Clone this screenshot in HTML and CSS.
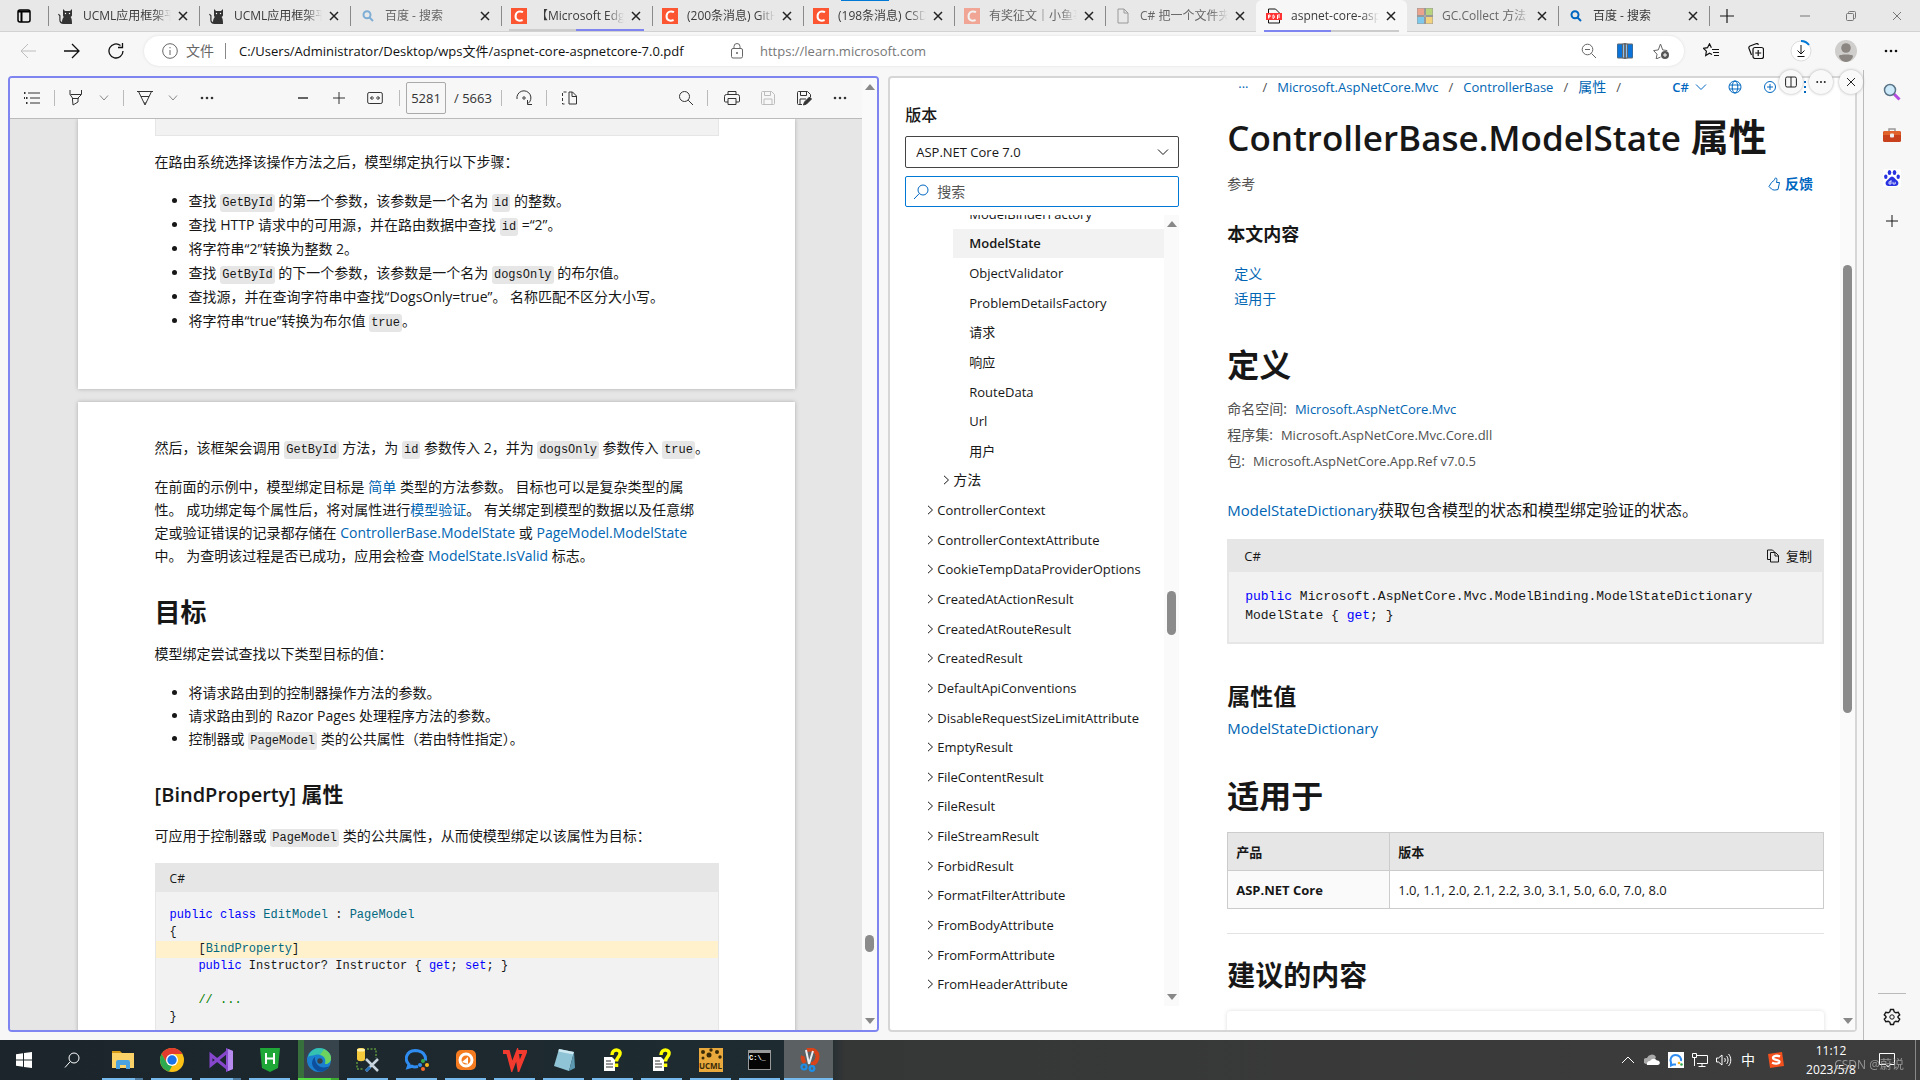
FILE: index.html
```html
<!DOCTYPE html>
<html lang="zh-CN">
<head>
<meta charset="utf-8">
<title>aspnet-core-aspnetcore-7.0.pdf</title>
<link rel="stylesheet" href="styles.css">
</head>
<body>
<svg class="defs" aria-hidden="true">
  <symbol id="x" viewBox="0 0 10 10"><path d="M1 1l8 8M9 1L1 9"/></symbol>
  <symbol id="dots" viewBox="0 0 16 16"><g fill="currentColor" stroke="none"><circle cx="3" cy="8" r="1.3"/><circle cx="8" cy="8" r="1.3"/><circle cx="13" cy="8" r="1.3"/></g></symbol>
  <symbol id="down" viewBox="0 0 10 10"><path d="M1 2.500l4 4.500 4-4.500"/></symbol>
  <symbol id="right" viewBox="0 0 10 10"><path d="M3 .8L7.500 5 3 9.200"/></symbol>
  <symbol id="plus" viewBox="0 0 12 12"><path d="M6 0v12M0 6h12"/></symbol>
  <symbol id="cat" viewBox="0 0 16 16"><path fill="#333" stroke="none" d="M5 1l2 2h5l2-2v6c0 1-.6 1.500-1.400 2 1.200 1.500 1.400 3.500 1.400 7H5.500C3 16 1.300 14.500 1.300 12V8L0 6.500l.8-.7L2.500 7.500V12c0 1 .5 1.600 1.500 2 .1-2 .6-3.800 1.800-5C5.200 8.500 5 8 5 7z"/><g fill="#fff" stroke="none"><circle cx="7.500" cy="5.500" r=".7"/><circle cx="11.500" cy="5.500" r=".7"/></g></symbol>
  <symbol id="lens" viewBox="0 0 12 12"><circle cx="5" cy="4.800" r="3.500"/><path d="M7.500 7.500L11 11"/></symbol>
  <symbol id="csdn" viewBox="0 0 16 16"><path fill="#fc5531" stroke="none" d="M0 0h16v16H0z"/><path fill="none" stroke="#fff" stroke-width="2" d="M12 4.200C9.500 2.800 5.200 3 4.600 7.500c-.5 4.800 3.400 6 7 4.500"/></symbol>
  <symbol id="mag" viewBox="0 0 16 16"><circle cx="6.500" cy="6.500" r="5"/><path d="M10.200 10.200L15 15"/></symbol>
  <symbol id="disk" viewBox="0 0 16 16"><path d="M2.500 1.500h9l3 3v9a1 1 0 0 1-1 1h-11a1 1 0 0 1-1-1v-11a1 1 0 0 1 1-1zM4.500 1.500v4h6v-4M4 14.500V9h8v5.500"/></symbol>
  <symbol id="helpdoc" viewBox="0 0 20 24"><path fill="#fff" d="M1 9h8l3 3v11H1z"/><path fill="none" stroke="#333" d="M3 13h5M3 16h7M3 19h7"/><path fill="none" stroke="#ff0" stroke-width="3.500" d="M9 7c0-7 9-6 8-1-.5 3-3.500 3.500-3.500 7.500M13.500 15.500v3.500"/></symbol>
</svg>

<header class="tabs">
  <button class="tabmenu" aria-label="标签操作"><svg class="i14" viewBox="0 0 14 14"><rect x="1" y="1" width="12" height="12" rx="2" stroke-width="1.500"/><path d="M1 2.500h12M4.500 3v10" stroke-width="2"/></svg></button>
  <nav class="tablist">
    <a class="tab" href="#"><svg class="fav"><use href="#cat"/></svg><span>UCML应用框架平台</span><svg class="x"><use href="#x"/></svg></a>
    <a class="tab" href="#"><svg class="fav"><use href="#cat"/></svg><span>UCML应用框架平台</span><svg class="x"><use href="#x"/></svg></a>
    <a class="tab asleep" href="#"><svg class="fav search"><use href="#lens"/></svg><span>百度 - 搜索</span><svg class="x"><use href="#x"/></svg></a>
    <a class="tab split-r" href="#"><svg class="fav"><use href="#csdn"/></svg><span>【Microsoft Edge】</span><svg class="x"><use href="#x"/></svg></a>
    <a class="tab" href="#"><svg class="fav"><use href="#csdn"/></svg><span>(200条消息) GitHub</span><svg class="x"><use href="#x"/></svg></a>
    <a class="tab loading" href="#"><svg class="fav"><use href="#csdn"/></svg><span>(198条消息) CSDN</span><svg class="x"><use href="#x"/></svg></a>
    <a class="tab asleep" href="#"><svg class="fav"><use href="#csdn"/></svg><span>有奖征文｜小鱼事</span><svg class="x"><use href="#x"/></svg></a>
    <a class="tab asleep" href="#"><svg class="fav" viewBox="0 0 16 16"><path d="M3 1h6l4 4v10H3zM9 1v4h4"/></svg><span>C# 把一个文件夹下</span><svg class="x"><use href="#x"/></svg></a>
    <a class="tab active split-l" href="#"><svg class="fav" viewBox="0 0 16 16"><path d="M2.500 15V1h7l4 4v10z" stroke="#111"/><path fill="#f33" stroke="none" d="M0 5h16v7H0z"/><path stroke="#fff" d="M2.500 10.500V7h1.500v2H3M7 7v3.500c2 0 2-3.500 0-3.500zM11.500 11V7H14M11.500 9H14"/></svg><span>aspnet-core-aspnet</span><svg class="x"><use href="#x"/></svg></a>
    <a class="tab first asleep" href="#"><svg class="fav" viewBox="0 0 16 16" stroke="none"><path fill="#f25022" d="M0 0h7.500v7.500H0z"/><path fill="#7fba00" d="M8.500 0H16v7.500H8.500z"/><path fill="#00a4ef" d="M0 8.500h7.500V16H0z"/><path fill="#ffb900" d="M8.500 8.500H16V16H8.500z"/></svg><span>GC.Collect 方法 (S</span><svg class="x"><use href="#x"/></svg></a>
    <a class="tab" href="#"><svg class="fav search"><use href="#lens"/></svg><span>百度 - 搜索</span><svg class="x"><use href="#x"/></svg></a>
  </nav>
  <button class="newtab" aria-label="新建标签页"><svg class="i14"><use href="#plus"/></svg></button>
  <div class="winbtns">
    <button aria-label="最小化"><svg class="i10" viewBox="0 0 10 10"><path d="M0 5h10"/></svg></button>
    <button aria-label="还原"><svg class="i10" viewBox="0 0 10 10"><rect x=".5" y="2.500" width="7" height="7" rx="1"/><path d="M2.500 2V1.500a1 1 0 0 1 1-1h5a1 1 0 0 1 1 1v5a1 1 0 0 1-1 1H8"/></svg></button>
    <button aria-label="关闭"><svg class="i10"><use href="#x"/></svg></button>
  </div>
</header>

<div class="navbar">
  <button class="hist dim" aria-label="后退"><svg class="i16" viewBox="0 0 16 16"><path d="M16 8H1M8 1L1 8l7 7"/></svg></button>
  <button class="hist" aria-label="前进"><svg class="i16" viewBox="0 0 16 16"><path d="M0 8h15M8 1l7 7-7 7" stroke-width="1.300"/></svg></button>
  <button class="hist" aria-label="刷新"><svg class="i16" viewBox="0 0 16 16"><path d="M15 8a7 7 0 1 1-2.500-5.400M14.500 0v4.500H10" stroke-width="1.300"/></svg></button>
  <div class="omnibox">
    <svg class="i16 info" viewBox="0 0 16 16"><circle cx="8" cy="8" r="7.300"/><path d="M8 7v5M8 4v1.300"/></svg>
    <span class="scheme">文件</span>
    <input class="url" aria-label="地址" value="C:/Users/Administrator/Desktop/wps文件/aspnet-core-aspnetcore-7.0.pdf">
    <svg class="i16 lock" viewBox="0 0 16 16"><rect x="2.500" y="5.500" width="11" height="9.500" rx="1.500"/><path d="M5 5.500V3.500a3 3 0 0 1 6 0v2"/><circle cx="8" cy="10" r=".6" fill="currentColor"/></svg>
    <span class="url2">https://learn.microsoft.com</span>
    <button class="ob" aria-label="缩放"><svg class="i16" viewBox="0 0 16 16"><circle cx="6.500" cy="6.500" r="5.300"/><path d="M10.500 10.500L15 15M4 6.500h5"/></svg></button>
    <button class="ob" aria-label="拆分窗口"><svg class="i16" viewBox="0 0 16 16" stroke="none"><path fill="#0a74da" d="M1 1h6v14H1a1 1 0 0 1-1-1V2a1 1 0 0 1 1-1zM9 1h6a1 1 0 0 1 1 1v12a1 1 0 0 1-1 1H9z"/><path fill="#8cc3f0" d="M5.500 1h5v14h-5z"/><path fill="#0a74da" d="M7.600 0h.8v16h-.8z"/></svg></button>
    <button class="ob" aria-label="收藏"><svg class="i16" viewBox="0 0 16 16"><path d="M7.500 14l-4.300 2 .8-4.800L.6 7.600l4.700-.7L7.500 1l2.200 5.900 4.600.7"/><circle cx="12" cy="12" r="4" fill="#555" stroke="none"/><path stroke="#fff" d="M12 10v4M10 12h4"/></svg></button>
  </div>
  <button class="nb" aria-label="收藏夹"><svg class="i16" viewBox="0 0 16 16"><path d="M9 11.500L6.500 10.300 2.700 12.500l.7-4.300L.5 5.300l4-.6L6.500.8l1.900 3.900M9 6.500h7M10 9.500h6M11 12.500h5" stroke-width="1.200"/></svg></button>
  <button class="nb" aria-label="集锦"><svg class="i16" viewBox="0 0 16 16"><rect x="5" y="4.500" width="10.500" height="11" rx="2" stroke-width="1.200"/><path stroke-width="1.200" d="M10.200 7v6M7.200 10h6M3.500 12L1 5.500a2 2 0 0 1 1-2.500l6-2.300a2 2 0 0 1 2.500 1"/></svg></button>
  <button class="nb" aria-label="下载"><svg class="i22" viewBox="0 0 22 22"><circle cx="11" cy="11" r="10" fill="#fff" stroke="#ddd"/><path d="M11 1a10 10 0 0 1 8 4" stroke="#0078d4" stroke-width="2"/><path d="M11 5v9M7.500 10.500L11 14l3.500-3.500M7.500 16.500h7"/></svg></button>
  <button class="nb" aria-label="个人资料"><svg class="i22" viewBox="0 0 22 22"><g stroke="none"><circle cx="11" cy="11" r="11" fill="#d0cecc"/><circle cx="11" cy="8" r="4.800" fill="#8b8681"/><path fill="#8b8681" d="M4 16c0-2 14-2 14 0 0 2-3 6-7 6s-7-4-7-6z"/></g></svg></button>
  <button class="nb" aria-label="设置及其他"><svg class="i16"><use href="#dots"/></svg></button>
</div>

<main class="work">
  <section class="pane pdf">
    <div class="pdfcol">
      <div class="toolbar">
        <button class="t32" aria-label="目录"><svg class="i16" viewBox="0 0 16 16"><path d="M4 3h12M6 8h10M6 13h10"/><path d="M0 3h1.500M2 8h1.500M2 13h1.500M0 8h1" stroke-width="2"/></svg></button><i class="sep"></i>
        <button class="t30" aria-label="突出显示"><svg class="i16" viewBox="0 0 16 16"><path d="M2 0v4.500L4.500 8v2l.5 5 5-3V8L13.500 4.500V0M2.500 4.500h10.500M4.500 8.500h6"/></svg></button><button class="t26" aria-label="突出显示选项"><svg class="i10 soft"><use href="#down"/></svg></button><i class="sep"></i>
        <button class="t30" aria-label="绘制"><svg class="i16" viewBox="0 0 16 16"><path d="M0 1.500h16M1.500 1.500L8 15l6.500-13.500M4 6.500h8M7 13h2"/></svg></button><button class="t26" aria-label="绘制选项"><svg class="i10 soft"><use href="#down"/></svg></button><button class="t42" aria-label="更多"><svg class="i16"><use href="#dots"/></svg></button>
        <button class="t36 mid" aria-label="缩小"><svg class="i10" viewBox="0 0 10 10"><path d="M0 5h10" stroke-width="1.500"/></svg></button><button class="t36" aria-label="放大"><svg class="i12"><use href="#plus"/></svg></button><button class="t36" aria-label="适应页宽"><svg class="i16" viewBox="0 0 16 16"><rect x=".7" y="2.500" width="14.600" height="11" rx="1.500"/><path d="M3.500 8h3.500M9 8h3.500M5.500 6l-2 2 2 2M10.500 6l2 2-2 2"/></svg></button><i class="sep"></i>
        <input class="pageno" aria-label="页码" value="5281"><span class="pages">/ 5663</span><i class="sep"></i>
        <button class="t32" aria-label="旋转"><svg class="i16" viewBox="0 0 16 16"><path d="M1 9A7 7 0 1 1 12 13.500M11.500 10v4.500H16"/><circle cx="8" cy="8" r="1.200"/></svg></button><i class="sep"></i>
        <button class="t32" aria-label="页面视图"><svg class="i16" viewBox="0 0 16 16"><path d="M8 2h3.500L15.500 6v8H8zM11 2v4.500h4"/><path stroke-dasharray="3 2" d="M5.500 2H1.500v12h4"/></svg></button>
        <button class="t30 end" aria-label="查找"><svg class="i16"><use href="#mag"/></svg></button><i class="sep"></i>
        <button class="t36" aria-label="打印"><svg class="i16" viewBox="0 0 16 16"><path d="M4 4.500V1.500h8v3M4 12H1.500a1 1 0 0 1-1-1V6.500a2 2 0 0 1 2-2h11a2 2 0 0 1 2 2V11a1 1 0 0 1-1 1H12M4 8.500h8v6H4z"/></svg></button><button class="t36 dim" aria-label="保存"><svg class="i16"><use href="#disk"/></svg></button><button class="t36" aria-label="另存为"><svg class="i16" viewBox="0 0 16 16"><path d="M6 14.500H2.500a1 1 0 0 1-1-1v-11a1 1 0 0 1 1-1h9l3 3V7M4.500 1.500v4h6v-4M4 14.500V9h6"/><path d="M7.500 15l1-3 5-5 2 2-5 5z" fill="currentColor"/></svg></button><button class="t36" aria-label="更多操作"><svg class="i16"><use href="#dots"/></svg></button>
      </div>
      <div class="pages-view">
        <article class="sheet s1">
          <div class="codetail"></div>
          <p>在路由系统选择该操作方法之后，模型绑定执行以下步骤：</p>
          <ul class="steps">
            <li>查找 <code>GetById</code> 的第一个参数，该参数是一个名为 <code>id</code> 的整数。</li>
            <li>查找 HTTP 请求中的可用源，并在路由数据中查找 <code>id</code> =“2”。</li>
            <li>将字符串“2”转换为整数 2。</li>
            <li>查找 <code>GetById</code> 的下一个参数，该参数是一个名为 <code>dogsOnly</code> 的布尔值。</li>
            <li>查找源，并在查询字符串中查找“DogsOnly=true”。 名称匹配不区分大小写。</li>
            <li>将字符串“true”转换为布尔值 <code>true</code>。</li>
          </ul>
        </article>
        <article class="sheet s2">
          <p>然后，该框架会调用 <code>GetById</code> 方法，为 <code>id</code> 参数传入 2，并为 <code>dogsOnly</code> 参数传入 <code>true</code>。</p>
          <p class="gap">在前面的示例中，模型绑定目标是 <a href="#">简单</a> 类型的方法参数。 目标也可以是复杂类型的属<br>性。 成功绑定每个属性后，将对属性进行<a href="#">模型验证</a>。 有关绑定到模型的数据以及任意绑<br>定或验证错误的记录都存储在 <a href="#">ControllerBase.ModelState</a> 或 <a href="#">PageModel.ModelState</a><br>中。 为查明该过程是否已成功，应用会检查 <a href="#">ModelState.IsValid</a> 标志。</p>
          <h2>目标</h2>
          <p>模型绑定尝试查找以下类型目标的值：</p>
          <ul>
            <li>将请求路由到的控制器操作方法的参数。</li>
            <li>请求路由到的 Razor Pages 处理程序方法的参数。</li>
            <li>控制器或 <code>PageModel</code> 类的公共属性（若由特性指定）。</li>
          </ul>
          <h3><span>[BindProperty]</span> 属性</h3>
          <p>可应用于控制器或 <code>PageModel</code> 类的公共属性，从而使模型绑定以该属性为目标：</p>
          <div class="code">
            <div class="codehead">C#</div>
            <pre><b>public</b> <b>class</b> <i>EditModel</i> : <i>PageModel</i>
{
<mark>    [<i>BindProperty</i>]</mark>
    <b>public</b> Instructor? Instructor { <b>get</b>; <b>set</b>; }

    <em>// ...</em>
}</pre>
          </div>
        </article>
      </div>
    </div>
    <div class="scroll pdfscroll"><i class="up"></i><i class="g1"></i><i class="thumb short"></i><i class="g2"></i><i class="dn"></i></div>
  </section>

  <section class="pane docs">
    <aside class="toc">
      <label for="ver">版本</label>
      <div class="select"><select id="ver"><option>ASP.NET Core 7.0</option></select><svg class="i12" viewBox="0 0 12 12"><path d="M1 3.500l5 5 5-5"/></svg></div>
      <div class="find"><svg class="i16" viewBox="0 0 16 16"><circle cx="10" cy="6" r="5"/><path d="M6.300 9.500L1 15"/></svg><input aria-label="搜索" placeholder="搜索"></div>
      <div class="tree">
        <ul>
          <li class="l3"><a href="#">ModelBinderFactory</a></li>
          <li class="l3 sel"><a href="#">ModelState</a></li>
          <li class="l3"><a href="#">ObjectValidator</a></li>
          <li class="l3"><a href="#">ProblemDetailsFactory</a></li>
          <li class="l3"><a href="#">请求</a></li>
          <li class="l3"><a href="#">响应</a></li>
          <li class="l3"><a href="#">RouteData</a></li>
          <li class="l3"><a href="#">Url</a></li>
          <li class="l3"><a href="#">用户</a></li>
          <li class="l2"><svg class="i10"><use href="#right"/></svg><a href="#">方法</a></li>
          <li><svg class="i10"><use href="#right"/></svg><a href="#">ControllerContext</a></li>
          <li><svg class="i10"><use href="#right"/></svg><a href="#">ControllerContextAttribute</a></li>
          <li><svg class="i10"><use href="#right"/></svg><a href="#">CookieTempDataProviderOptions</a></li>
          <li><svg class="i10"><use href="#right"/></svg><a href="#">CreatedAtActionResult</a></li>
          <li><svg class="i10"><use href="#right"/></svg><a href="#">CreatedAtRouteResult</a></li>
          <li><svg class="i10"><use href="#right"/></svg><a href="#">CreatedResult</a></li>
          <li><svg class="i10"><use href="#right"/></svg><a href="#">DefaultApiConventions</a></li>
          <li><svg class="i10"><use href="#right"/></svg><a href="#">DisableRequestSizeLimitAttribute</a></li>
          <li><svg class="i10"><use href="#right"/></svg><a href="#">EmptyResult</a></li>
          <li><svg class="i10"><use href="#right"/></svg><a href="#">FileContentResult</a></li>
          <li><svg class="i10"><use href="#right"/></svg><a href="#">FileResult</a></li>
          <li><svg class="i10"><use href="#right"/></svg><a href="#">FileStreamResult</a></li>
          <li><svg class="i10"><use href="#right"/></svg><a href="#">ForbidResult</a></li>
          <li><svg class="i10"><use href="#right"/></svg><a href="#">FormatFilterAttribute</a></li>
          <li><svg class="i10"><use href="#right"/></svg><a href="#">FromBodyAttribute</a></li>
          <li><svg class="i10"><use href="#right"/></svg><a href="#">FromFormAttribute</a></li>
          <li><svg class="i10"><use href="#right"/></svg><a href="#">FromHeaderAttribute</a></li>
        </ul>
        <div class="scroll treescroll"><i class="up"></i><i class="g1"></i><i class="thumb medium"></i><i class="g2"></i><i class="dn"></i></div>
      </div>
    </aside>
    <article class="doc">
      <div class="crumbs">
        <a href="#" class="more">···</a><span>/</span><a href="#">Microsoft.AspNetCore.Mvc</a><span>/</span><a href="#">ControllerBase</a><span>/</span><a href="#" class="cjk">属性</a><span>/</span>
        <div class="acts">
          <button class="lang">C# <svg class="i12" viewBox="0 0 12 12"><path d="M1 3.500l5 5 5-5"/></svg></button>
          <button aria-label="语言"><svg class="i14" viewBox="0 0 14 14"><circle cx="7" cy="7" r="6"/><ellipse cx="7" cy="7" rx="2.800" ry="6"/><path d="M1.500 5h11M1.500 9h11"/></svg></button>
          <button aria-label="添加"><svg class="i14" viewBox="0 0 14 14"><circle cx="7" cy="7" r="5.500"/><path d="M7 4v6M4 7h6"/></svg></button>
          <button aria-label="更多"><svg class="i14" viewBox="0 0 14 14"><path d="M7 1v2M7 6v2M7 11v2" stroke-width="2"/></svg></button>
        </div>
      </div>
      <h1><span>ControllerBase.ModelState</span> 属性</h1>
      <div class="sub"><span>参考</span><a href="#"><svg class="i14" viewBox="0 0 14 14"><path d="M4.500 5.500L7.500 3c.3-1 .3-2 1.300-2 1.500 0 1.200 2 .7 4.500h3L11 12.500c-3 .8-5 .8-6.500-.5L2 9.500z"/></svg>反馈</a></div>
      <h4>本文内容</h4>
      <nav class="inpage"><a href="#">定义</a><a href="#">适用于</a></nav>
      <h2>定义</h2>
      <dl>
        <div><dt>命名空间:</dt><dd><a href="#">Microsoft.AspNetCore.Mvc</a></dd></div>
        <div><dt>程序集:</dt><dd>Microsoft.AspNetCore.Mvc.Core.dll</dd></div>
        <div><dt>包:</dt><dd>Microsoft.AspNetCore.App.Ref v7.0.5</dd></div>
      </dl>
      <p class="summary"><a class="api" href="#">ModelStateDictionary</a>获取包含模型的状态和模型绑定验证的状态。</p>
      <div class="code">
        <div class="codehead"><span>C#</span><button><svg class="i14" viewBox="0 0 14 14"><path d="M4.500 3.500h5L12.500 6.500V13h-8zM9 3.500v3.500h3.500M4.500 10.500H1.500V1h5l2 2"/></svg>复制</button></div>
        <pre><b>public</b> Microsoft.AspNetCore.Mvc.ModelBinding.ModelStateDictionary
ModelState { <b>get</b>; }</pre>
      </div>
      <h3>属性值</h3>
      <p class="value"><a class="api" href="#">ModelStateDictionary</a></p>
      <h2 class="applies">适用于</h2>
      <table>
        <thead><tr><th scope="col">产品</th><th scope="col">版本</th></tr></thead>
        <tbody><tr><th scope="row">ASP.NET Core</th><td>1.0, 1.1, 2.0, 2.1, 2.2, 3.0, 3.1, 5.0, 6.0, 7.0, 8.0</td></tr></tbody>
      </table>
      <hr>
      <h2 class="rec">建议的内容</h2>
      <div class="card"></div>
    </article>
    <div class="scroll docscroll"><i class="up"></i><i class="g1"></i><i class="thumb long"></i><i class="g2"></i><i class="dn"></i></div>
    <div class="float">
      <button aria-label="布局"><svg class="i12" viewBox="0 0 12 12"><rect x=".6" y="1" width="10.800" height="10" rx="1.500"/><path d="M6 1v10"/></svg></button>
      <button aria-label="更多"><svg class="i12"><use href="#dots"/></svg></button>
      <button aria-label="关闭"><svg class="i10"><use href="#x"/></svg></button>
    </div>
  </section>

  <aside class="side">
    <button aria-label="搜索"><svg class="i18" viewBox="0 0 18 18"><path d="M11 11l5.500 5.500" stroke="#b44be1" stroke-width="3"/><circle cx="7" cy="7" r="5.500" fill="#cdeafa" stroke="#5a7487" stroke-width="1.500"/></svg></button>
    <button aria-label="工具"><svg class="i18" viewBox="0 0 18 18"><path d="M6 5V3h6v2" stroke="#999" stroke-width="1.500"/><g stroke="none"><rect y="5" width="18" height="11" rx="1.500" fill="#c8401c"/><path fill="#e2622b" d="M1 5h16l1 4H0z"/><rect x="7" y="7.500" width="4" height="4" rx="1" fill="#eee"/></g></svg></button>
    <button aria-label="百度"><svg class="i18" viewBox="0 0 18 18"><g stroke="none"><rect width="18" height="18" rx="2" fill="#fff"/><g fill="#2932e1"><ellipse cx="2.800" cy="7.800" rx="1.700" ry="2.200"/><ellipse cx="6.500" cy="3.500" rx="1.800" ry="2.500"/><ellipse cx="11.500" cy="3.500" rx="1.800" ry="2.500"/><ellipse cx="15.200" cy="7.800" rx="1.700" ry="2.200"/><path d="M9 7.500c2 0 3 2.500 5 4 2.500 2 1.500 5.500-1.500 5.500h-7C2.500 17 1.500 13.500 4 11.500 6 10 7 7.500 9 7.500z"/></g></g><path fill="none" stroke="#fff" stroke-width=".8" d="M8 11v4H6v-2.200h2M10 12.800V15h2.200v-2.200"/></svg></button>
    <button aria-label="自定义"><svg class="i12"><use href="#plus"/></svg></button>
    <button class="gear" aria-label="设置"><svg class="i18" viewBox="0 0 18 18"><circle cx="9" cy="9" r="2.200"/><path stroke-width="1.400" d="M7.500 1.500h3l.7 2.400 1.600.9 2.400-.6 1.500 2.600L15 8.500v1l1.700 1.700-1.500 2.600-2.400-.6-1.600.9-.7 2.400h-3l-.7-2.400-1.600-.9-2.400.6-1.500-2.600L3 9.500v-1L1.300 6.800l1.500-2.600 2.400.6 1.600-.9z"/></svg></button>
  </aside>
</main>

<footer class="taskbar">
  <button class="sys" aria-label="开始"><svg class="i16" viewBox="0 0 16 16"><path fill="#fff" stroke="none" d="M0 2.200l7-1v6.300H0zM8 1l8-1v7.500H8zM0 8.500h7v6.300l-7-1zM8 8.500h8V16l-8-1z"/></svg></button>
  <button class="sys" aria-label="搜索"><svg class="i16 white" viewBox="0 0 16 16"><circle cx="10" cy="6" r="5"/><path d="M6.300 9.500L1 15.500"/></svg></button>
  <div class="apps">
    <button class="app multi" aria-label="文件资源管理器"><svg class="i24" viewBox="0 0 24 24"><path fill="#d89b17" d="M1 3h8l2 2v3H1z"/><path fill="#fbd267" d="M1 5h22v15H1z"/><path fill="#4aa3e0" d="M5 21v-7a2 2 0 0 1 2-2h10a2 2 0 0 1 2 2v7h-4v-4H9v4z"/></svg></button>
    <button class="app" aria-label="Chrome"><svg class="i24" viewBox="0 0 24 24"><circle cx="12" cy="12" r="12" fill="#fbc116"/><path fill="#e33b2e" d="M12 6h10.400A12 12 0 0 0 1.600 6l5.200 9z"/><path fill="#2da94f" d="M1.600 6l5.200 9 5.200 3-3 5.600A12 12 0 0 1 1.600 6z"/><circle cx="12" cy="12" r="6" fill="#fff"/><circle cx="12" cy="12" r="4.700" fill="#1a73e8"/></svg></button>
    <button class="app multi" aria-label="Visual Studio"><svg class="i24" viewBox="0 0 24 24"><path fill="#8a4fd0" d="M17 0l7 3v18l-7 3z"/><path fill="#b78af0" d="M19 1l5 2v18l-5 2z"/><path fill="none" stroke="#8647cc" stroke-width="3" d="M18 4L2 17V7l16 13"/></svg></button>
    <button class="app" aria-label="HBuilder"><svg class="i24" viewBox="0 0 24 24"><path fill="#1fa838" d="M2 0h20l-2 20-8 4-8-4z"/><path fill="none" stroke="#fff" stroke-width="2" d="M8 5v11M16 5v11M8 10.500h8"/></svg></button>
    <button class="app edge multi" aria-label="Edge"><svg class="i24" viewBox="0 0 24 24"><circle cx="12" cy="12" r="12" fill="#1b7fd0"/><path fill="#35c1b0" d="M1 9C3 3 8 0 12 0c7 0 12 5 12 10 0 4-3 6-6 6 2-6-4-11-10-9-3 .5-6 1-7 2z"/><path fill="#6dd35e" d="M17 1.200C22 3.500 24 7 24 10c0 4-3 6-6 6 2-5-1-9-5-9z"/><path fill="#0d4f9c" d="M8 9c-6 5-2 14 6 14.800 4-.5 7-3 8.500-5.800-8 4-15-1-14.500-9z"/><circle cx="13" cy="13" r="2.700" fill="#38424a"/></svg></button>
    <button class="app" aria-label="SQL 工具"><svg class="i24" viewBox="0 0 24 24"><path fill="#f4c93c" d="M1 2c0-3 8-3 8 0v9c0 3-8 3-8 0z"/><ellipse cx="5" cy="2" rx="4" ry="1.500" fill="#fff2b0"/><path fill="none" stroke="#7ac943" stroke-dasharray="2 1.500" d="M11 1h9v9M1 14v7h7"/><path fill="none" stroke="#c8d4de" stroke-width="2.500" d="M10 11l12 12M22 11L10 23"/><path fill="none" stroke="#2b6fb5" stroke-width="3" d="M14 19l-4 4"/></svg></button>
    <button class="app" aria-label="企业微信"><svg class="i24" viewBox="0 0 24 24"><path fill="none" stroke="#2f8cf0" stroke-width="3" d="M13 18.500c-3 .7-5 .3-6-.3l-4 1.300 1-3C-1 12 1 3 10 2.500c8 0 11 5 10.500 10"/><circle cx="18" cy="13" r="2" fill="#2fa84f"/><circle cx="22" cy="17" r="2" fill="#f8b41c"/><circle cx="18" cy="21" r="2" fill="#f56a2d"/><circle cx="15" cy="17" r="2" fill="#2f8cf0"/></svg></button>
    <button class="app" aria-label="远程工具"><svg class="i24" viewBox="0 0 24 24"><rect x="2" y="2" width="20" height="20" rx="5" fill="#f47b20"/><circle cx="12" cy="12" r="6" fill="none" stroke="#fff" stroke-width="3"/><path fill="#fff" d="M8 14l6-5v7z"/></svg></button>
    <button class="app" aria-label="WPS"><svg class="i24" viewBox="0 0 24 24"><path fill="none" stroke="#f23a2f" stroke-width="4" d="M0 4h5l4 15 5-13 2 13 6-15h-8"/></svg></button>
    <button class="app" aria-label="记事本"><svg class="i24" viewBox="0 0 24 24"><path fill="#8fc3d6" d="M7 1l15 3-5 19-15-5z"/><path fill="#cfe9f2" d="M7 1l15 3-.6 2.500-15-3z"/><path fill="#5c99b0" d="M22 4l1 16-6 3z"/></svg></button>
    <button class="app" aria-label="帮助文档"><svg class="i24"><use href="#helpdoc"/></svg></button>
    <button class="app" aria-label="帮助文档"><svg class="i24"><use href="#helpdoc"/></svg></button>
    <button class="app" aria-label="UCML"><span class="ucml"><svg viewBox="0 0 24 12"><g fill="#3b2a08"><circle cx="4" cy="4" r="2"/><circle cx="10" cy="7" r="2.500"/><circle cx="12" cy="2" r="1.700"/><circle cx="18" cy="4" r="2"/><circle cx="21" cy="9" r="1.700"/><circle cx="4" cy="10" r="1.500"/></g></svg>UCML</span></button>
    <button class="app" aria-label="命令提示符"><span class="cmd">C:\_</span></button>
    <button class="app snip" aria-label="截图工具"><svg class="i24" viewBox="0 0 24 24"><path fill="none" stroke="#d8431a" stroke-width="4" d="M10 2c7-2 12 3 10 9-1 3-3 5-6 5M6 8c-1 3 0 5 2 7"/><path fill="none" stroke="#e8eef2" stroke-width="2" d="M9 2l3 14M16 3l-4 13"/><g fill="none" stroke="#1d8fe8" stroke-width="2.200"><circle cx="7" cy="19" r="2.500"/><circle cx="15" cy="20.500" r="2.300"/></g></svg></button>
  </div>
  <div class="tray">
    <button aria-label="显示隐藏的图标"><svg class="i12" viewBox="0 0 12 12"><path d="M0 9l6-6 6 6"/></svg></button>
    <button aria-label="OneDrive"><svg class="i16" viewBox="0 0 16 16"><g stroke="none"><path fill="#aaa" d="M2 12a3 3 0 0 1 1-6 5 5 0 0 1 9-1l-2 4z"/><path fill="#fff" d="M3 13a3 3 0 0 1 3-4 4 4 0 0 1 7-.5A2.300 2.300 0 0 1 14 13z"/></g></svg></button>
    <button aria-label="企业微信"><svg class="i16" viewBox="0 0 16 16"><path fill="#fff" stroke="none" d="M0 0h16v16H0z"/><path stroke="#2f8cf0" stroke-width="2" d="M8 12.500H5l-2 1v-3C1.500 7 3.500 3 7.500 3s6 3 5.500 6"/><circle cx="11" cy="11" r="1.300" fill="#f8b41c" stroke="none"/><circle cx="13.500" cy="12.500" r="1.300" fill="#2fa84f" stroke="none"/></svg></button>
    <button aria-label="网络"><svg class="i16" viewBox="0 0 16 16"><path d="M5 3.500h10.500v8H5M10 11.500V14M6.500 14.500h7M.5 1.500h4v4h-4zM2.500 5.500V14"/></svg></button>
    <button aria-label="音量"><svg class="i16" viewBox="0 0 16 16"><path d="M.5 6h2L6 3v10L2.500 10h-2zM8.500 6c1 1 1 3 0 4M10.500 4c2 2 2 6 0 8M12.500 2c3 3 3 9 0 12"/></svg></button>
    <button class="ime">中</button>
    <button class="sogou" aria-label="搜狗输入法"><svg class="i16" viewBox="0 0 16 16"><path fill="#f4501e" stroke="none" d="M0 2L14 0l2 14-14 2z"/><path stroke="#fff" stroke-width="2.300" d="M12 4.500C9 3 5 4 5 6c0 2.500 7 1.500 6.500 4-.5 2-4.500 2-7.500.8"/></svg></button>
    <div class="clock"><time>11:12</time><time>2023/5/8</time></div>
    <button class="note" aria-label="通知"><svg class="i16" viewBox="0 0 16 16"><path d="M.5 1.500h15v11H11l-2 2.500-2-2.500H.5z"/></svg></button>
    <i class="desk"></i>
  </div>
  <span class="mark">CSDN @蔚说</span>
</footer>
</body>
</html>
```
FILE: styles.css
```css
*{box-sizing:border-box}
body{margin:0;height:100vh;min-height:600px;display:flex;flex-direction:column;overflow:hidden;background:#f7f7f7;color:#171717;font:13px/18px "Open Sans","Noto Sans CJK SC",sans-serif}
button{border:0;background:none;padding:0;font:inherit;color:inherit;display:flex;align-items:center;justify-content:center;flex:none}
input,select{font:inherit;color:inherit;min-width:0}
a{color:#0065b3;text-decoration:none}
svg{display:block;flex:none;fill:none;stroke:currentColor}
.defs{position:absolute;width:0;height:0}
h1,h2,h3,h4,p,ul,dl,dd,pre{margin:0}
h1,h2,h3,h4{font-weight:600}
ul{list-style:none;padding:0}
.i10{width:10px;height:10px}
.i12{width:12px;height:12px}
.i14{width:14px;height:14px}
.i16{width:16px;height:16px}
.i18{width:18px;height:18px}
.i22{width:22px;height:22px}
.i24{width:24px;height:24px}
.dim{color:#bdbdbd}
.white{color:#fff}

/* tab strip */
.tabs{flex:none;height:32px;display:flex;align-items:stretch;background:#e8e8e8;border-bottom:1px solid #d2d2d2;font-size:12px}
.tabmenu{width:48px;color:#000}
.tablist{display:flex;flex:0 1 1661px;min-width:0}
.tab{flex:1 1 0;min-width:0;display:flex;align-items:center;padding:0 11px 0 10px;color:#3a3a3a;position:relative}
.tab::before{content:"";width:1px;height:20px;background:#8a8a8a;position:absolute;left:0;top:6px}
.tab .fav{width:16px;height:16px;margin-right:9px}
.tab .search{width:12px;height:12px;margin:0 11px 0 2px;color:#0067c0;stroke-width:2}
.tab span{flex:1;min-width:0;overflow:hidden;white-space:nowrap;-webkit-mask-image:linear-gradient(90deg,#000 80%,transparent);mask-image:linear-gradient(90deg,#000 80%,transparent)}
.tab .x{width:10px;height:10px;margin-left:7px;color:#222;stroke-width:1.500}
.tab.asleep .fav{opacity:.45}
.tab.asleep span{color:#666}
.tab.active{background:#f7f7f7;border-radius:6px 6px 0 0;margin-bottom:-1px;padding-bottom:1px}
.tab.active::before,.tab.first::before{display:none}
.tab.split-r::after,.tab.split-l::after{content:"";position:absolute;left:8px;right:8px;bottom:0;height:2px}
.tab.split-r::after{background:linear-gradient(90deg,#ccc 50%,#7f85f0 50%)}
.tab.split-l::after{background:linear-gradient(90deg,#7f85f0 50%,#ccc 50%)}
.tab.loading::after{content:"";position:absolute;left:38px;width:48px;top:0;height:1px;background:#0078d4}
.newtab{width:34px;border-left:1px solid #8a8a8a;height:20px;margin-top:6px}
.winbtns{display:flex;margin-left:auto;color:#777}
.winbtns button{width:46px}

/* address bar */
.navbar{flex:none;height:44px;padding:0 7px 6px 6px;display:flex;align-items:center;color:#111}
.hist{width:44px;height:32px}
.nb{width:45px;height:32px}
.omnibox{flex:1;min-width:0;height:30px;margin:0 4px 0 6px;padding:0 5px 0 18px;display:flex;align-items:center;background:#fff;border-radius:15px;box-shadow:0 0 3px #ddd;color:#666}
.omnibox .info{margin-right:8px}
.scheme{font-size:14px;padding-right:11px;border-right:1px solid #888;line-height:16px}
.url{border:0;background:none;outline:0;padding:0;margin-left:13px;width:474px;color:#111}
.lock{margin:0 15px 0 16px}
.url2{margin-right:auto;color:#777}
.ob{width:36px;height:28px}

/* panes */
.work{flex:1;min-height:0;display:flex;padding-left:8px}
.pane{min-width:0;display:flex;margin-bottom:8px;border:2px solid #d6d6d6;border-radius:4px;background:#fff;position:relative}
.pdf{flex:871 1 0;border-color:#7f85f0;overflow:hidden;background:#fafafa}
.docs{flex:969 1 0;margin-left:9px}
.pdfcol{flex:1;min-width:0;display:flex;flex-direction:column}
.toolbar{flex:none;height:41px;padding:0 4px 0 6px;display:flex;align-items:center;background:#f7f7f7;border-bottom:1px solid #bbb;color:#333}
.t26{width:26px}.t30{width:30px}.t32{width:32px}.t36{width:36px}.t42{width:42px}
.toolbar button{height:32px}
.soft{color:#888}
.sep{flex:none;width:1px;height:16px;margin:0 6px;background:#bbb}
.mid{margin-left:57px}
.end{margin-left:auto}
.pageno{width:40px;height:32px;border:1px solid #aaa;border-radius:2px;background:#f7f7f7;text-align:center;padding:0}
.pages{margin:0 3px 0 8px}
.pages-view{flex:1;min-height:0;overflow:hidden;background:#e6e6e6;display:flex;flex-direction:column;align-items:center;gap:13px}
.sheet{flex:none;width:717px;padding:0 76px 56px 77px;background:#fff;box-shadow:0 0 4px #aaa;font-size:14px;line-height:23px;white-space:nowrap}
.codetail{height:17px;background:#f2f2f2;border:1px solid #e6e6e6;border-top:0;margin-bottom:14px}
.sheet ul{list-style:disc;padding-left:34px;margin-top:16px}
.steps{line-height:24px}
.sheet code{font:12px/1 "Liberation Mono",monospace;background:#e6e6e6;border-radius:3px;padding:2px}
.s2{padding-top:34px}
.gap{margin-top:16px}
.sheet h2{font-size:26px;line-height:34px;margin:28px 0 13px;font-weight:700}
.sheet h3{font-size:21px;line-height:30px;margin:29px 0 14px}
.sheet h3 span{font-size:20px}
.code{border:1px solid #e6e6e6;background:#f2f2f2}
.code .codehead{background:#e6e6e6}
.sheet .code{margin-top:16px}
.sheet .codehead{height:28px;padding:3px 14px;font-size:12px}
.sheet pre{font:12px/17px "Liberation Mono",monospace;padding:15px 0 16px 14px}
.sheet mark{display:inline-block;background:#fff1cc;color:inherit;margin-left:-14px;padding-left:14px;width:calc(100% + 14px);vertical-align:top}
pre b{font-weight:400;color:#0101fd}
pre i{font-style:normal;color:#006881}
pre em{font-style:normal;color:#008000}

/* scrollbars */
.scroll{flex:none;width:15px;display:flex;flex-direction:column;align-items:center;background:#fafafa;padding:6px 0}
.up,.dn{flex:none;border:5px solid transparent;width:0}
.up{border-top:0;border-bottom:6px solid #888}
.dn{border-bottom:0;border-top:6px solid #888}
.thumb{flex:none;width:9px;border-radius:5px;background:#8b8b8b}
.short{height:17px}
.medium{height:44px}
.long{height:448px}
.pdfscroll .g1{flex:840}.pdfscroll .g2{flex:66}
.treescroll .g1{flex:364}.treescroll .g2{flex:360}
.docscroll .g1{flex:174}.docscroll .g2{flex:303}

/* table of contents */
.toc{flex:none;width:289px;padding:25px 0 24px 15px;display:flex;flex-direction:column}
.toc label{font-size:16px;line-height:24px;font-weight:500}
.select{position:relative;margin-top:9px}
.select select{width:100%;height:32px;appearance:none;border:1px solid #444;border-radius:2px;background:#fff;padding:0 10px;font-weight:500;display:block}
.select svg{position:absolute;right:10px;top:10px}
.find{margin-top:8px;height:31px;display:flex;align-items:center;border:1px solid #0078d4;border-radius:2px;padding-left:7px;color:#0067c0}
.find input{flex:1;border:0;outline:0;background:none;padding:0 0 0 8px;font-size:14px}
.find input::placeholder{color:#555;opacity:1}
.tree{flex:1;min-height:0;display:flex;overflow:hidden;margin-top:8px}
.tree ul{flex:1;display:grid;grid-auto-rows:1fr;margin:-16px 0 7px}
.tree li{display:flex;align-items:center;min-height:0;padding-left:20px;line-height:20px;white-space:nowrap}
.tree li.l2{padding-left:36px;font-size:14px}
.tree li.l3{margin-left:48px;padding-left:16px}
.tree .sel{background:#f2f2f2;font-weight:600}
.tree a{color:#171717}
.tree svg{margin-right:2px}

/* article */
.doc{flex:1;min-width:0;overflow:hidden;padding:0 16px 0 48px}
.crumbs{display:flex;align-items:center;height:18px;gap:10px;color:#505050;white-space:nowrap}
.more{margin:0 4px 0 11px}
.cjk{font-size:14px}
.acts{margin-left:auto;display:flex;align-items:center;gap:21px;color:#0067c0;padding-right:12px}
.lang{font-weight:600;gap:6px}
h1{font-size:38px;line-height:50px;margin-top:15px;white-space:nowrap}
h1 span{font-size:35px}
.sub{display:flex;justify-content:space-between;margin-top:11px;font-size:14px;line-height:20px;color:#505050}
.sub a{display:flex;align-items:center;gap:4px;font-weight:700;margin-right:11px;color:#0067c0}
.doc h4{font-size:18px;line-height:24px;margin-top:28px;font-weight:700}
.inpage{display:flex;flex-direction:column;align-items:flex-start;margin-top:15px;padding-left:7px;font-size:14px;line-height:25px}
.doc h2{font-size:32px;line-height:42px;margin-top:33px;font-weight:700}
dl{margin-top:10px;color:#505050;line-height:26px}
dl div{display:flex;gap:8px}
dt{font-size:14px}
.summary{margin-top:24px;font-size:16px;line-height:24px;white-space:nowrap}
.api{font-size:15px}
.doc .code{margin-top:17px;border-width:0 2px 2px;border-style:solid}
.doc .codehead{height:33px;display:flex;align-items:center;justify-content:space-between;padding:0 10px 0 15px}
.doc .codehead button{gap:6px}
.doc pre{font:13px/19px "Liberation Mono",monospace;padding:15px 16px 17px;overflow:hidden}
.doc h3{font-size:23px;line-height:32px;margin-top:36px;font-weight:700}
.value{line-height:24px;margin-top:4px}
.doc .applies{margin-top:34px}
table{width:100%;margin-top:15px;border-collapse:collapse}
th,td{height:38px;padding:0 8px;border:1px solid #ccc;text-align:left}
thead th{background:#e6e6e6;font-weight:600}
th:first-child{width:162px}
tbody th{background:#fafafa;font-weight:700}
hr{border:0;border-top:1px solid #e3e3e3;margin:24px 0 0}
.doc .rec{font-size:28px;line-height:36px;margin-top:23px}
.card{height:60px;margin-top:18px;border-radius:4px;box-shadow:0 0 4px #ddd}
.float{position:absolute;top:-8px;right:-8px;display:flex;gap:6px;color:#222}
.float button{width:24px;height:24px;border-radius:12px;background:#f9f9f9;box-shadow:0 0 3px #aaa}

/* side rail */
.side{flex:none;width:57px;margin:-6px 0 0 6px;border-left:1px solid #bbb;display:flex;flex-direction:column;align-items:center}
.side button{width:40px;height:43px}
.side .gear{margin-top:auto;width:28px;height:47px;border-top:1px solid #bbb}

/* taskbar */
.taskbar{flex:none;height:40px;display:flex;position:relative;background:linear-gradient(90deg,#1b252b,#1e2c31 43%,#353636 44%,#3d3d3d);color:#fff}
.sys{width:48px}
.apps{display:flex;padding-left:2px}
.app{width:49px;border:solid transparent;border-width:0 4px;background:linear-gradient(#76b9ed,#76b9ed) bottom/100% 2px no-repeat padding-box;height:40px}
.app svg{stroke:none}
.app.multi{background:linear-gradient(90deg,#76b9ed 80%,#4d7ba0 80%) bottom/100% 2px no-repeat padding-box}
.app.edge{background:linear-gradient(90deg,#54dd45 80%,#3ca832 80%) bottom/100% 2px no-repeat padding-box,linear-gradient(90deg,#38703d 15%,#38444b 15%) padding-box}
.app.snip{border-width:0;background:linear-gradient(#76b9ed,#76b9ed) bottom/100% 2px no-repeat,#5b6063}
.ucml{width:24px;height:24px;background:#e9a93c;color:#3b2a08;font-size:8px;font-weight:700;line-height:11px}
.ucml svg{width:24px;height:12px}
.cmd{width:23px;height:20px;background:#050505;border:1px solid #999;border-top-width:3px;font:700 7px/10px "Liberation Mono",monospace;text-align:left}
.tray{margin-left:auto;display:flex;align-items:stretch}
.tray button{width:24px}
.tray .ime{font-size:14px}
.tray .sogou{width:32px}
.clock{width:66px;margin-left:6px;display:flex;flex-direction:column;text-align:center;font-size:12px;line-height:19px;padding-top:1px}
.tray .note{width:46px;margin-right:5px}
.desk{width:5px;border-left:1px solid #888}
.mark{position:absolute;right:16px;bottom:6px;font-size:12px;line-height:18px;color:#b4b4b4;opacity:.75}
```
